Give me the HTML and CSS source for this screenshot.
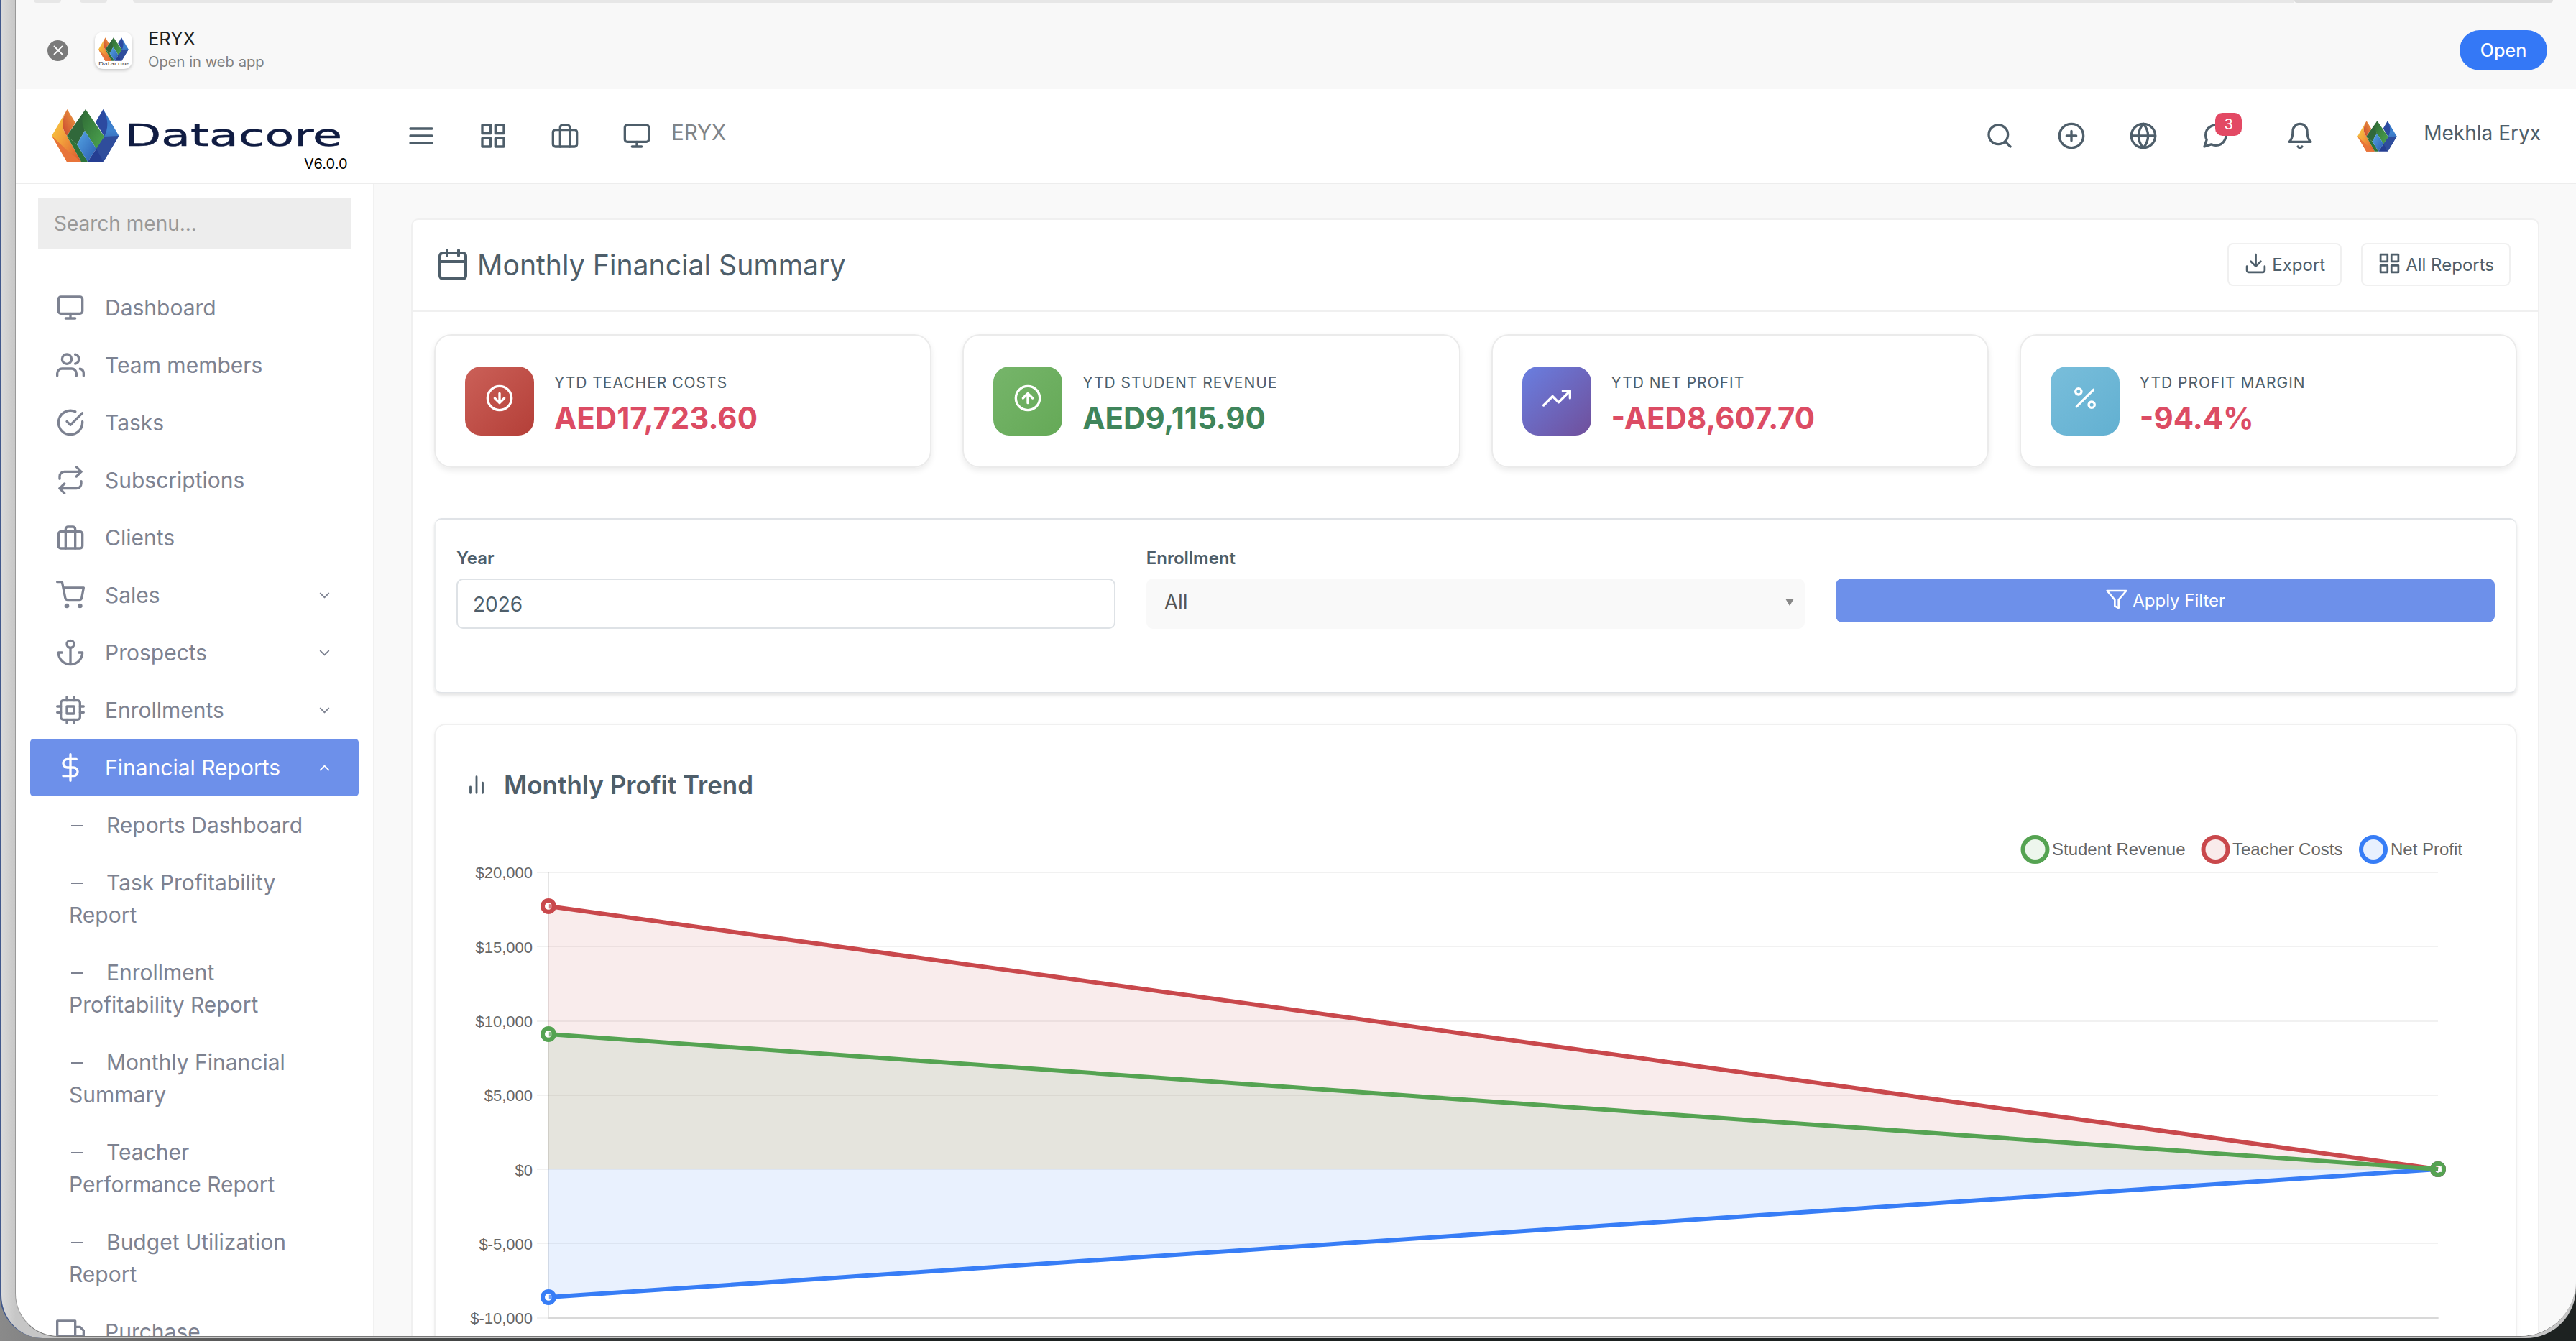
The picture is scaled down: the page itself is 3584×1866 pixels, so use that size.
FILE: index.html
```
<!DOCTYPE html>
<html lang="en">
<head>
<meta charset="UTF-8">
<title>Monthly Financial Summary | ERYX</title>
<link rel="stylesheet" href="styles.css">
</head>

<body>

<!-- icon sprite -->
<svg class="sprite" width="0" height="0">
  <defs>
    <linearGradient id="gYellow" x1="0" y1="0" x2="1" y2="1"><stop offset="0" stop-color="#f9d93f"/><stop offset=".45" stop-color="#f3a23c"/><stop offset="1" stop-color="#d9542f"/></linearGradient>
    <linearGradient id="gOrange" x1="0" y1="1" x2="1" y2="0"><stop offset="0" stop-color="#c8432f"/><stop offset="1" stop-color="#f0a040"/></linearGradient>
    <linearGradient id="gGreen" x1="0" y1="0" x2="1" y2="1"><stop offset="0" stop-color="#2f6b35"/><stop offset="1" stop-color="#4da650"/></linearGradient>
    <linearGradient id="gSky" x1="0" y1="0" x2="1" y2="1"><stop offset="0" stop-color="#55a5e4"/><stop offset="1" stop-color="#2a5cb0"/></linearGradient>
    <linearGradient id="gBlue" x1="0" y1="0" x2="0" y2="1"><stop offset="0" stop-color="#2f6fc4"/><stop offset=".4" stop-color="#3f83cf"/><stop offset="1" stop-color="#2b4090"/></linearGradient>
  </defs>
  <symbol id="gem" viewBox="0 0 94 73">
    <path d="M0 37L21.500 0C13 14 13 26 21 37L41 73H21Z" fill="url(#gYellow)"/>
    <path d="M0 37L21 57L41 73H21Z" fill="#e8743a"/>
    <path d="M21.500 0L33 19L21 37C13 26 13 14 21.500 0Z" fill="url(#gOrange)"/>
    <path d="M71.500 0L93.500 37L72 73L62 55L73 38Z" fill="url(#gBlue)"/>
    <path d="M71.500 0L61 18L73 38C79 26 79 14 71.500 0Z" fill="#2c4aa0"/>
    <path d="M73 38L93.500 37L72 73L60 56Z" fill="#2f4d9c"/>
    <path d="M47 0L21 37L35 49L46 30L44 14Z" fill="#30683a"/>
    <path d="M47 0C40 12 42 20 46 30L62 55L73 38Z" fill="url(#gGreen)"/>
    <path d="M21 37L35 49L50 73H41Z" fill="#2d7339"/>
    <path d="M46 30L62 55L50 73L35 49Z" fill="url(#gSky)"/>
    <path d="M62 55L72 73H50Z" fill="#253e92"/>
  </symbol>
  <symbol id="menu" viewBox="0 0 24 24"><path d="M3 12h18M3 6h18M3 18h18"/></symbol>
  <symbol id="grid" viewBox="0 0 24 24"><path d="M3 3h7v7H3zM14 3h7v7h-7zM14 14h7v7h-7zM3 14h7v7H3z"/></symbol>
  <symbol id="briefcase" viewBox="0 0 24 24"><rect x="2" y="7" width="20" height="14" rx="2"/><path d="M16 21V5a2 2 0 0 0-2-2h-4a2 2 0 0 0-2 2v16"/></symbol>
  <symbol id="monitor" viewBox="0 0 24 24"><rect x="2" y="3" width="20" height="14" rx="2"/><path d="M8 21h8M12 17v4"/></symbol>
  <symbol id="search" viewBox="0 0 24 24"><circle cx="11" cy="11" r="8"/><path d="M21 21l-4.350-4.350"/></symbol>
  <symbol id="plus" viewBox="0 0 24 24"><circle cx="12" cy="12" r="10"/><path d="M12 8v8M8 12h8"/></symbol>
  <symbol id="globe" viewBox="0 0 24 24"><circle cx="12" cy="12" r="10"/><path d="M2 12h20M12 2a15.300 15.300 0 0 1 4 10 15.300 15.300 0 0 1-4 10 15.300 15.300 0 0 1-4-10 15.300 15.300 0 0 1 4-10z"/></symbol>
  <symbol id="message" viewBox="0 0 24 24"><path d="M21 11.500a8.380 8.380 0 0 1-.9 3.800 8.500 8.500 0 0 1-7.600 4.700 8.380 8.380 0 0 1-3.800-.9L3 21l1.900-5.700a8.380 8.380 0 0 1-.9-3.800 8.500 8.500 0 0 1 4.700-7.600 8.380 8.380 0 0 1 3.800-.9h.5a8.480 8.480 0 0 1 8 8v.5z"/></symbol>
  <symbol id="bell" viewBox="0 0 24 24"><path d="M18 8A6 6 0 0 0 6 8c0 7-3 9-3 9h18s-3-2-3-9M13.730 21a2 2 0 0 1-3.460 0"/></symbol>
  <symbol id="users" viewBox="0 0 24 24"><path d="M17 21v-2a4 4 0 0 0-4-4H5a4 4 0 0 0-4 4v2"/><circle cx="9" cy="7" r="4"/><path d="M23 21v-2a4 4 0 0 0-3-3.870M16 3.130a4 4 0 0 1 0 7.750"/></symbol>
  <symbol id="check" viewBox="0 0 24 24"><path d="M22 11.080V12a10 10 0 1 1-5.930-9.140"/><path d="M22 4L12 14.010l-3-3"/></symbol>
  <symbol id="repeat" viewBox="0 0 24 24"><path d="M17 1l4 4-4 4"/><path d="M3 11V9a4 4 0 0 1 4-4h14M7 23l-4-4 4-4"/><path d="M21 13v2a4 4 0 0 1-4 4H3"/></symbol>
  <symbol id="cart" viewBox="0 0 24 24"><circle cx="9" cy="21" r="1"/><circle cx="20" cy="21" r="1"/><path d="M1 1h4l2.680 13.390a2 2 0 0 0 2 1.610h9.720a2 2 0 0 0 2-1.610L23 6H6"/></symbol>
  <symbol id="anchor" viewBox="0 0 24 24"><circle cx="12" cy="5" r="3"/><path d="M12 22V8M5 12H2a10 10 0 0 0 20 0h-3"/></symbol>
  <symbol id="cpu" viewBox="0 0 24 24"><rect x="4" y="4" width="16" height="16" rx="2"/><path d="M9 9h6v6H9zM9 1v3M15 1v3M9 20v3M15 20v3M20 9h3M20 14h3M1 9h3M1 14h3"/></symbol>
  <symbol id="dollar" viewBox="0 0 24 24"><path d="M12 1v22M17 5H9.500a3.500 3.500 0 0 0 0 7h5a3.500 3.500 0 0 1 0 7H6"/></symbol>
  <symbol id="truck" viewBox="0 0 24 24"><path d="M1 3h15v13H1zM16 8h4l3 3v5h-7V8z"/><circle cx="5.500" cy="18.500" r="2.500"/><circle cx="18.500" cy="18.500" r="2.500"/></symbol>
  <symbol id="down" viewBox="0 0 24 24"><path d="M6 9l6 6 6-6"/></symbol>
  <symbol id="up" viewBox="0 0 24 24"><path d="M18 15l-6-6-6 6"/></symbol>
  <symbol id="calendar" viewBox="0 0 24 24"><rect x="3" y="4" width="18" height="18" rx="2"/><path d="M16 2v4M8 2v4M3 10h18"/></symbol>
  <symbol id="download" viewBox="0 0 24 24"><path d="M21 15v4a2 2 0 0 1-2 2H5a2 2 0 0 1-2-2v-4M7 10l5 5 5-5M12 15V3"/></symbol>
  <symbol id="filter" viewBox="0 0 24 24"><path d="M22 3H2l8 9.460V19l4 2v-8.540L22 3z"/></symbol>
  <symbol id="circle-down" viewBox="0 0 24 24"><circle cx="12" cy="12" r="10"/><path d="M8 12l4 4 4-4M12 8v8"/></symbol>
  <symbol id="circle-up" viewBox="0 0 24 24"><circle cx="12" cy="12" r="10"/><path d="M16 12l-4-4-4 4M12 16V8"/></symbol>
  <symbol id="trend" viewBox="0 0 24 24"><path d="M23 6l-9.500 9.500-5-5L1 18M17 6h6v6"/></symbol>
  <symbol id="percent" viewBox="0 0 24 24"><path d="M19 5L5 19"/><circle cx="6.500" cy="6.500" r="2.500"/><circle cx="17.500" cy="17.500" r="2.500"/></symbol>
  <symbol id="bars" viewBox="0 0 24 24"><path d="M18 20V10M12 20V4M6 20v-6"/></symbol>
  <symbol id="close" viewBox="0 0 24 24"><path d="M6 6l12 12M18 6L6 18"/></symbol>
</svg>

<div class="backdrop">
<div class="window">

<div class="toolbar"><i class="dot"></i><i class="dot"></i><i class="address"></i><i class="tab"></i></div>

<div class="banner">
  <span class="dismiss"><svg class="icon"><use href="#close"/></svg></span>
  <span class="appicon">
    <svg class="gem"><use href="#gem"/></svg>
    <svg class="appname" viewBox="0 0 42 7"><text x="0" y="6" textLength="42" lengthAdjust="spacingAndGlyphs">Datacore</text></svg>
  </span>
  <div class="apptext"><div class="name">ERYX</div><div class="sub">Open in web app</div></div>
  <a class="open">Open</a>
</div>

<div class="topbar">
  <div class="brand">
    <svg class="gem"><use href="#gem"/></svg>
    <svg class="wordmark" viewBox="0 0 300 44"><text x="-3" y="36" textLength="303" lengthAdjust="spacingAndGlyphs">Datacore</text></svg>
    <span class="version">V6.0.0</span>
  </div>
  <div class="left-icons">
    <svg class="icon"><use href="#menu"/></svg>
    <svg class="icon"><use href="#grid"/></svg>
    <svg class="icon"><use href="#briefcase"/></svg>
    <svg class="icon"><use href="#monitor"/></svg>
    <span class="company">ERYX</span>
  </div>
  <div class="right-icons">
    <svg class="icon"><use href="#search"/></svg>
    <svg class="icon"><use href="#plus"/></svg>
    <svg class="icon"><use href="#globe"/></svg>
    <span class="chat"><svg class="icon"><use href="#message"/></svg><b class="badge">3</b></span>
    <svg class="icon"><use href="#bell"/></svg>
    <svg class="gem avatar"><use href="#gem"/></svg>
    <span class="user">Mekhla Eryx</span>
  </div>
</div>

<div class="page">

<div class="sidebar">
  <div class="searchbox">Search menu...</div>
  <a class="item"><svg class="icon"><use href="#monitor"/></svg><span>Dashboard</span></a>
  <a class="item"><svg class="icon"><use href="#users"/></svg><span>Team members</span></a>
  <a class="item"><svg class="icon"><use href="#check"/></svg><span>Tasks</span></a>
  <a class="item"><svg class="icon"><use href="#repeat"/></svg><span>Subscriptions</span></a>
  <a class="item"><svg class="icon"><use href="#briefcase"/></svg><span>Clients</span></a>
  <a class="item"><svg class="icon"><use href="#cart"/></svg><span>Sales</span><svg class="icon arrow"><use href="#down"/></svg></a>
  <a class="item"><svg class="icon"><use href="#anchor"/></svg><span>Prospects</span><svg class="icon arrow"><use href="#down"/></svg></a>
  <a class="item"><svg class="icon"><use href="#cpu"/></svg><span>Enrollments</span><svg class="icon arrow"><use href="#down"/></svg></a>
  <a class="item active"><svg class="icon"><use href="#dollar"/></svg><span>Financial Reports</span><svg class="icon arrow"><use href="#up"/></svg></a>
  <a class="subitem">Reports Dashboard</a>
  <a class="subitem">Task Profitability<br>Report</a>
  <a class="subitem">Enrollment<br>Profitability Report</a>
  <a class="subitem">Monthly Financial<br>Summary</a>
  <a class="subitem">Teacher<br>Performance Report</a>
  <a class="subitem">Budget Utilization<br>Report</a>
  <a class="item"><svg class="icon"><use href="#truck"/></svg><span>Purchase</span></a>
</div>

<div class="main">
<div class="panel">

<div class="panel-head">
  <svg class="icon"><use href="#calendar"/></svg>
  <h1>Monthly Financial Summary</h1>
  <a class="btn"><svg class="icon"><use href="#download"/></svg>Export</a>
  <a class="btn"><svg class="icon"><use href="#grid"/></svg>All Reports</a>
</div>

<div class="stats">
  <div class="stat">
    <span class="tile red"><svg class="icon"><use href="#circle-down"/></svg></span>
    <div><div class="label">YTD TEACHER COSTS</div><div class="value">AED17,723.60</div></div>
  </div>
  <div class="stat">
    <span class="tile green"><svg class="icon"><use href="#circle-up"/></svg></span>
    <div><div class="label">YTD STUDENT REVENUE</div><div class="value plus">AED9,115.90</div></div>
  </div>
  <div class="stat">
    <span class="tile purple"><svg class="icon"><use href="#trend"/></svg></span>
    <div><div class="label">YTD NET PROFIT</div><div class="value">-AED8,607.70</div></div>
  </div>
  <div class="stat">
    <span class="tile cyan"><svg class="icon"><use href="#percent"/></svg></span>
    <div><div class="label">YTD PROFIT MARGIN</div><div class="value">-94.4%</div></div>
  </div>
</div>

<div class="filters">
  <div class="field"><label>Year</label><div class="input">2026</div></div>
  <div class="field"><label>Enrollment</label><div class="select">All<i></i></div></div>
  <div class="field"><a class="apply"><svg class="icon"><use href="#filter"/></svg>Apply Filter</a></div>
</div>

<div class="chart-card">
  <div class="chart-title"><svg class="icon"><use href="#bars"/></svg><h2>Monthly Profit Trend</h2></div>
  <svg class="chart" viewBox="607 1140 2892 740">
    <g class="legend">
      <circle cx="2832.500" cy="1183" r="17" fill="#edf6ed" stroke="#55a352"/><text x="2856" y="1191">Student Revenue</text>
      <circle cx="3083.500" cy="1183" r="17" fill="#f9ebeb" stroke="#c9484c"/><text x="3107" y="1191">Teacher Costs</text>
      <circle cx="3303" cy="1183" r="17" fill="#e8f0fe" stroke="#377df6"/><text x="3327" y="1191">Net Profit</text>
    </g>
    <g class="ticks">
      <text x="742" y="1223">$20,000</text>
      <text x="742" y="1327">$15,000</text>
      <text x="742" y="1430">$10,000</text>
      <text x="742" y="1533">$5,000</text>
      <text x="742" y="1637">$0</text>
      <text x="742" y="1740">$-5,000</text>
      <text x="742" y="1843">$-10,000</text>
    </g>
    <path class="gridlines" d="M748 1215H3393M748 1318H3393M748 1422H3393M748 1525H3393M748 1628H3393M748 1731H3393M748 1835H3393"/>
    <path class="axis" d="M764 1215V1835H3394"/>
    <!-- net profit, teacher costs, student revenue -->
    <path d="M764 1806L3393 1628H764Z" fill="#377df6" fill-opacity=".11"/>
    <path d="M764 1262L3393 1628H764Z" fill="#c9484c" fill-opacity=".105"/>
    <path d="M764 1440L3393 1628H764Z" fill="#45a862" fill-opacity=".11"/>
    <g class="series" stroke="#377df6"><path d="M764 1806L3393 1628"/><circle cx="764" cy="1806" r="8" fill="#e8f0fe" fill-opacity=".3"/><circle cx="3393" cy="1628" r="8"/></g>
    <g class="series" stroke="#c9484c"><path d="M764 1262L3393 1628"/><circle cx="764" cy="1262" r="8" fill="#f9ebeb" fill-opacity=".3"/><circle cx="3393" cy="1628" r="8"/></g>
    <g class="series" stroke="#55a352"><path d="M764 1440L3393 1628"/><circle cx="764" cy="1440" r="8" fill="#edf6ed" fill-opacity=".3"/><circle cx="3393" cy="1628" r="8"/></g>
    <g class="glints"><path d="M763 1258v8M763 1436v8M763 1802v8M3396 1624v8"/></g>
  </svg>
</div>

</div>
</div>

</div>
</div>
</div>

</body>
</html>
```
FILE: styles.css
```
*{
  box-sizing:border-box;
}

body{
  margin:0;
  height:1866px;
  overflow:hidden;
  font-family:Inter,sans-serif;
  color:#4e5e6a;
  background:linear-gradient(90deg,#8a8a8a,#5a5a5a 300px,#1d2221 1200px);
}

.sprite{
  position:absolute;
}

.backdrop{
  height:1862px;
  padding-left:19px;
  border-left:2px solid #41588c;
  border-radius:0 0 70px 60px;
  background:linear-gradient(90deg,#dadada,#c6c6c6 20px,#c6c6c6);
}

.window{
  height:1860px;
  overflow:hidden;
  border-left:1px solid #999;
  border-bottom:1px solid #777;
  border-radius:0 0 78px 60px;
  background:#fff;
}

.icon{
  width:40px;
  height:40px;
  flex:none;
  fill:none;
  stroke:currentColor;
  stroke-width:2;
  stroke-linecap:round;
  stroke-linejoin:round;
}

/* browser strip */
.toolbar{
  display:flex;
  align-items:flex-end;
  height:4px;
  padding-left:25px;
  background:#f8f8f8;
}

.toolbar i{
  background:#e7e7e7;
  height:4px;
}

.toolbar .dot{
  width:38px;
  margin-right:26px;
  border-radius:0 0 19px 19px;
}

.toolbar .address{
  flex:1;
  margin-left:10px;
  border-radius:0 0 0 10px;
}

.toolbar .tab{
  width:360px;
  margin-right:32px;
  background:#dcdcdc;
  border-radius:0 0 12px 12px;
}

.banner{
  display:flex;
  align-items:center;
  height:120px;
  padding:12px 40px 0 44px;
  background:#f8f8f8;
}

.dismiss{
  display:flex;
  align-items:center;
  justify-content:center;
  width:29px;
  height:29px;
  border-radius:50%;
  background:#7b7b7b;
  color:#fff;
}

.dismiss .icon{
  width:22px;
  height:22px;
}

.appicon{
  display:flex;
  flex-direction:column;
  align-items:center;
  width:52px;
  height:52px;
  margin-left:37px;
  padding-top:8px;
  border-radius:12px;
  background:#fff;
  box-shadow:0 2px 4px rgba(0,0,0,.2);
}

.appicon .gem{
  width:42px;
  height:33px;
}

.appname{
  width:42px;
  height:7px;
  overflow:visible;
}

.appname text,.wordmark text{
  font-family:"DejaVu Sans",sans-serif;
  font-size:7px;
  fill:#444;
}

.apptext{
  flex:1;
  margin-left:22px;
}

.apptext .name{
  font-size:25.500px;
  line-height:32px;
  color:#222;
}

.apptext .sub{
  font-size:20.200px;
  line-height:32px;
  color:#808080;
}

.open{
  width:122px;
  line-height:56px;
  border-radius:28px;
  background:#3478f6;
  color:#fff;
  font-size:25px;
  font-weight:500;
  text-align:center;
}

/* top navigation */
.topbar{
  display:flex;
  align-items:center;
  height:132px;
  border-bottom:2px solid #ededed;
}

.brand{
  position:relative;
  display:flex;
  width:498px;
  padding:0 0 2px 50px;
}

.brand .gem{
  width:94px;
  height:73px;
}

.wordmark{
  width:300px;
  height:44px;
  margin:15px 0 0 10px;
  overflow:visible;
}

.wordmark text{
  font-size:43px;
  fill:#101c42;
  stroke:#101c42;
  stroke-width:.5;
}

.version{
  position:absolute;
  left:401px;
  top:64px;
  color:#000;
  font-size:20px;
}

.left-icons,.right-icons{
  display:flex;
  align-items:center;
}

.left-icons{
  flex:1;
  gap:60px;
  margin-left:46px;
}

.company{
  margin:-10px 0 0 -32px;
  font-size:29.500px;
  color:#808488;
}

.right-icons{
  padding-right:49px;
}

.right-icons .icon{
  margin-right:60px;
}

.chat{
  position:relative;
  display:flex;
  margin-right:18px;
}

.badge{
  position:absolute;
  left:20px;
  top:-12px;
  width:37px;
  line-height:32px;
  border-radius:10px;
  background:#e34964;
  color:#fff;
  font-size:20px;
  font-weight:400;
  text-align:center;
}

.avatar{
  width:55px;
  height:43px;
}

.user{
  margin:-9px 0 0 37px;
  font-size:28px;
}

.page{
  display:flex;
}

/* sidebar */
.sidebar{
  width:499px;
  height:1604px;
  flex:none;
  padding:20px 20px 0;
  border-right:2px solid #f1f1f1;
  color:#7d8291;
  font-size:30px;
}

.searchbox{
  width:436px;
  margin:0 0 42px 11px;
  padding-left:22px;
  background:#ededed;
  color:#999;
  font-size:28px;
  line-height:71px;
  height:70px;
}

.item{
  display:flex;
  align-items:center;
  height:80px;
  padding:0 36px 0 36px;
  border-radius:5px;
}

.item span{
  flex:1;
  margin-left:28px;
  white-space:nowrap;
}

.item .arrow{
  width:23px;
  height:23px;
}

.active{
  background:#6d90ea;
  color:#fff;
}

.subitem{
  display:block;
  padding:18px 0 17px 54px;
  line-height:45px;
}

.subitem::before{
  content:"";
  display:inline-block;
  width:16px;
  height:2px;
  margin:0 33px 9px 3px;
  background:#7d8291;
}

/* content */
.main{
  flex:1;
  height:1604px;
  overflow:hidden;
  padding:48px 51px 0 51px;
  background:#f9f9f9;
}

.panel{
  height:1700px;
  border:2px solid #f0f0f0;
  border-radius:10px;
  background:#fff;
}

.panel-head{
  display:flex;
  align-items:center;
  height:128px;
  padding:0 38px 2px 32px;
  border-bottom:2px solid #f0f0f0;
}

.panel-head>.icon{
  width:48px;
  height:48px;
}

h1{
  flex:1;
  margin:0 0 0 10px;
  font-size:39.200px;
  font-weight:400;
}

.btn{
  display:flex;
  align-items:center;
  gap:6px;
  height:60px;
  margin-left:27px;
  padding:0 21px;
  border:2px solid #f0f0f0;
  border-radius:8px;
  font-size:24px;
}

.btn .icon{
  width:33px;
  height:33px;
  margin-top:-4px;
}

.stats{
  display:flex;
  gap:43px;
  padding:31px 29px 0 30px;
}

.stat{
  flex:1;
  display:flex;
  align-items:center;
  height:186px;
  padding-left:41px;
  border:2px solid #ebebeb;
  border-radius:24px;
  box-shadow:0 4px 8px rgba(0,0,0,.08);
}

.tile{
  display:flex;
  align-items:center;
  justify-content:center;
  width:96px;
  height:96px;
  margin-right:28px;
  padding-bottom:8px;
  border-radius:22px;
  color:#fff;
}

.red{background:linear-gradient(135deg,#cb6058,#b43f38);}
.green{background:linear-gradient(135deg,#76b56a,#65a957);}
.purple{background:linear-gradient(135deg,#697fe1,#704f9b);}
.cyan{background:linear-gradient(135deg,#79bedb,#62b0d1);}

.label{
  font-size:21px;
  line-height:32px;
  letter-spacing:1px;
  margin-top:8px;
}

.value{
  margin-top:8px;
  color:#dc4c64;
  font-size:42px;
  font-weight:700;
  line-height:50px;
}

.plus{
  color:#3f855b;
}

.filters{
  display:flex;
  gap:43px;
  height:244px;
  margin:70px 29px 0 30px;
  padding:37px 29px 0 29px;
  border:2px solid #e0e3e7;
  border-left-color:#eceeef;
  border-right-color:#eceeef;
  border-radius:10px;
  box-shadow:0 3px 4px rgba(0,0,0,.1);
}

.field{
  flex:1;
}

label{
  display:block;
  height:45px;
  line-height:34px;
  font-size:24px;
  font-weight:600;
}

.input,.select{
  height:70px;
  padding-left:21px;
  border:2px solid #dee2e6;
  border-radius:9px;
  font-size:28px;
  line-height:68px;
}

.select{
  display:flex;
  justify-content:space-between;
  align-items:center;
  padding:0 13px 4px 23px;
  border-color:#f9f9f9;
  background:#f9f9f9;
  color:#555;
}

.select i{
  border:6px solid transparent;
  border-top:10px solid #888;
  border-bottom:0;
}

.apply{
  display:flex;
  align-items:center;
  justify-content:center;
  gap:6px;
  height:61px;
  margin-top:45px;
  border-radius:9px;
  background:#6d90ea;
  color:#fff;
  font-size:24px;
}

.apply .icon{
  width:32px;
  height:32px;
  margin-top:-4px;
}

.chart-card{
  height:900px;
  margin:42px 29px 0 30px;
  border:2px solid #f0f0f0;
  border-radius:16px;
  box-shadow:0 2px 6px rgba(0,0,0,.05);
}

.chart-title{
  display:flex;
  align-items:center;
  height:130px;
  padding:36px 0 0 40px;
}

.chart-title .icon{
  width:34px;
  height:34px;
}

h2{
  margin:0 0 0 21px;
  font-size:35px;
  font-weight:600;
}

.chart{
  display:block;
  width:2892px;
  height:740px;
  font-family:"Liberation Sans",sans-serif;
}

.legend circle{
  stroke-width:6;
}

.chart text{
  fill:#666;
}

.legend text{
  font-size:24px;
}

.ticks text{
  font-size:22px;
  text-anchor:end;
}

.gridlines,.axis{
  fill:none;
  stroke:#000;
  stroke-opacity:.055;
  stroke-width:2;
}

.axis{
  stroke-opacity:.1;
}

.series{
  fill:none;
  stroke-width:6;
}

.glints{
  stroke:#fff;
  stroke-opacity:.8;
  stroke-width:4;
}
```
